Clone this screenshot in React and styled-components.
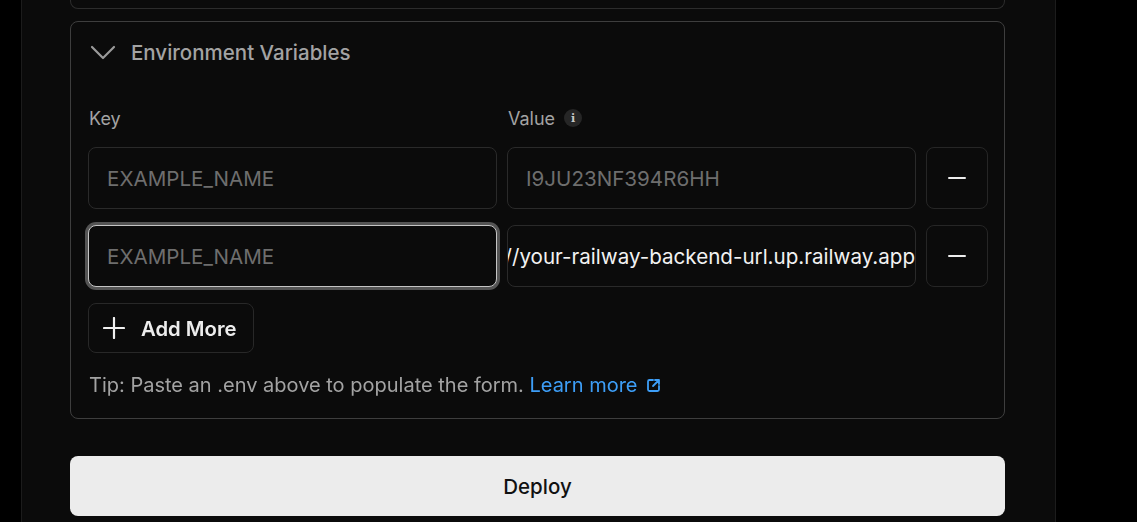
import { useEffect, useRef } from 'react';
import styled, { createGlobalStyle } from 'styled-components';

const GlobalStyle = createGlobalStyle`
    html, body {
        margin: 0;
        background: #000;
        font-family: Inter, "Noto Sans", sans-serif;
        overflow: hidden;
    }
`;

const Page = styled.div`
    display: flex;
    padding-left: 21px;
    height: 522px;
`;

const Panel = styled.main`
    width: 1035px;
    box-sizing: border-box;
    background: #0b0b0b;
    border-left: 1px solid #1c1c1c;
    border-right: 1px solid #1c1c1c;
    padding: 0 50px 0 48px;
    display: flex;
    flex-direction: column;
`;

const CollapsedCard = styled.div`
    height: 9px;
    box-sizing: border-box;
    border: 1px solid #2c2c2c;
    border-top: none;
    border-radius: 0 0 8px 8px;
`;

const Card = styled.section`
    margin-top: 12px;
    border: 1px solid #3e3e3e;
    border-radius: 8px;
    padding: 17px 16px 21px 17px;
    display: flex;
    flex-direction: column;
`;

const Header = styled.button`
    display: flex;
    align-items: center;
    gap: 15px;
    height: 26px;
    padding: 0 0 0 2px;
    border: none;
    background: none;
    color: #a3a3a3;
    font-family: inherit;
    font-size: 20.5px;
    font-weight: 500;
    cursor: pointer;
`;

const Grid = styled.div`
    display: grid;
    grid-template-columns: 1fr 1fr 62px;
    column-gap: 10px;
    margin-top: ${(p) => p.$top || 0}px;
`;

const Label = styled.label`
    display: flex;
    align-items: center;
    gap: 9px;
    height: 22px;
    padding-left: 1px;
    color: #a3a3a3;
    font-size: 18px;
`;

const Info = styled.span`
    display: inline-flex;
    align-items: center;
    justify-content: center;
    width: 18px;
    height: 18px;
    border-radius: 50%;
    background: #262626;
    color: #c8c8c8;
    font-size: 11px;
    font-weight: 700;
    font-family: "DejaVu Serif", serif;
`;

const Field = styled.input`
    height: 62px;
    box-sizing: border-box;
    border: 1px solid ${(p) => (p.$focused ? '#c4c4c4' : '#2a2a2a')};
    box-shadow: ${(p) => (p.$focused ? '0 0 0 3px #545454' : 'none')};
    border-radius: 8px;
    background: #0b0b0b;
    padding: 0 ${(p) => (p.$flush ? 0 : 18)}px;
    color: #f2f2f2;
    font-family: inherit;
    font-size: 20.6px;
    outline: none;
    caret-color: #fff;
    &::placeholder {
        color: #6e6e6e;
    }
`;

const SquareButton = styled.button`
    height: 62px;
    border: 1px solid #262626;
    border-radius: 8px;
    background: transparent;
    display: flex;
    align-items: center;
    justify-content: center;
    cursor: pointer;
    &::before {
        content: '';
        width: 18px;
        height: 2px;
        background: #ededed;
        border-radius: 1px;
    }
`;

const AddButton = styled.button`
    align-self: flex-start;
    margin-top: 16px;
    height: 50px;
    padding: 0 16px 0 14px;
    display: flex;
    align-items: center;
    gap: 16px;
    border: 1px solid #282828;
    border-radius: 8px;
    background: transparent;
    color: #ededed;
    font-family: inherit;
    font-size: 20.3px;
    font-weight: 600;
    cursor: pointer;
`;

const Tip = styled.p`
    margin: 20px 0 0 1px;
    line-height: 24px;
    color: #a3a3a3;
    font-size: 20px;
`;

const LearnLink = styled.a`
    color: #3d9ef7;
    text-decoration: none;
    display: inline-flex;
    align-items: center;
    gap: 8px;
`;

const DeployButton = styled.button`
    margin-top: 37px;
    height: 60px;
    border: none;
    border-radius: 8px;
    background: #ececec;
    color: #111;
    font-family: inherit;
    font-size: 20.5px;
    font-weight: 500;
    cursor: pointer;
`;

const Chevron = () => (
    <svg width="26" height="26" viewBox="0 0 26 26" fill="none" stroke="#9a9a9a" strokeWidth="2.2" strokeLinecap="round" strokeLinejoin="round">
        <path d="M2 8l11 11 11-11" />
    </svg>
);

const Plus = () => (
    <svg width="22" height="22" viewBox="0 0 22 22" fill="none" stroke="#f0f0f0" strokeWidth="2.2" strokeLinecap="round">
        <path d="M11 1v20M1 11h20" />
    </svg>
);

const External = () => (
    <svg width="15" height="15" viewBox="0 0 15 15" fill="none" stroke="#3d9ef7" strokeWidth="1.8" strokeLinecap="round" strokeLinejoin="round">
        <path d="M7 2H3.5A1.5 1.5 0 0 0 2 3.5v8A1.5 1.5 0 0 0 3.5 13h8a1.5 1.5 0 0 0 1.5-1.5V8" />
        <path d="M9 2h4v4M13 2L7 8" />
    </svg>
);

const EnvRow = ({ top, keyRef, valueRef, value, valuePlaceholder, focused }) => (
    <Grid $top={top}>
        <Field ref={keyRef} placeholder="EXAMPLE_NAME" $focused={focused} />
        <Field ref={valueRef} placeholder={valuePlaceholder} defaultValue={value} $flush={!!value} />
        <SquareButton aria-label="Remove" />
    </Grid>
);

export default function App() {
    const keyRef = useRef(null);
    const valueRef = useRef(null);

    useEffect(() => {
        const v = valueRef.current;
        if (v) v.scrollLeft = v.scrollWidth;
        if (keyRef.current) keyRef.current.focus({ preventScroll: true });
    }, []);

    return (
        <>
            <GlobalStyle />
            <Page>
                <Panel>
                    <CollapsedCard />
                    <Card>
                        <Header>
                            <Chevron />
                            Environment Variables
                        </Header>
                        <Grid $top={42}>
                            <Label>Key</Label>
                            <Label>
                                Value <Info>i</Info>
                            </Label>
                        </Grid>
                        <EnvRow top={18} valuePlaceholder="I9JU23NF394R6HH" />
                        <EnvRow
                            top={16}
                            keyRef={keyRef}
                            valueRef={valueRef}
                            focused
                            value="https://your-railway-backend-url.up.railway.app"
                        />
                        <AddButton>
                            <Plus />
                            Add More
                        </AddButton>
                        <Tip>
                            Tip: Paste an .env above to populate the form.{' '}
                            <LearnLink href="#">
                                Learn more <External />
                            </LearnLink>
                        </Tip>
                    </Card>
                    <DeployButton>Deploy</DeployButton>
                </Panel>
            </Page>
        </>
    );
}
